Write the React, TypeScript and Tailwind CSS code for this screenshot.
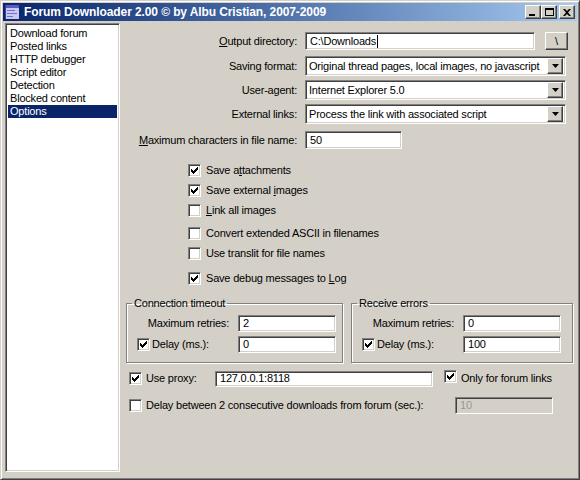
import React from 'react';

const sunken =
  'border border-t-[#808080] border-l-[#808080] border-b-white border-r-white shadow-[inset_1px_1px_0_#404040,inset_-1px_-1px_0_#d4d0c8]';
const raised =
  'border border-t-white border-l-white border-b-[#404040] border-r-[#404040] shadow-[inset_-1px_-1px_0_#808080] bg-[#d4d0c8]';

function Check({ on }: { on?: boolean }) {
  return (
    <span className={`relative inline-block w-[13px] h-[13px] shrink-0 bg-white ${sunken}`}>
      {on && (
        <svg className="absolute left-[2px] top-[2px]" width="7" height="7" viewBox="0 0 7 7">
          <path d="M0 2h1v1h1v1h1V3h1V2h1V1h1V0h1v3H6v1H5v1H4v1H3v1H2V6H1V5H0z" fill="#000" />
        </svg>
      )}
    </span>
  );
}

function Field({ value, className = '', disabled, caret }: { value: string; className?: string; disabled?: boolean; caret?: boolean }) {
  return (
    <div
      className={`flex items-center pl-[4px] ${sunken} ${disabled ? 'bg-[#d4d0c8] text-[#9a9890]' : 'bg-white'} ${className}`}
    >
      <span className="whitespace-nowrap">{value}</span>
      {caret && <span className="inline-block w-px h-[13px] bg-black ml-px" />}
    </div>
  );
}

function Combo({ value }: { value: string }) {
  return (
    <div className={`flex items-center w-[261px] h-[20px] bg-white p-[2px] ${sunken}`}>
      <span className="flex-1 pl-[1px] whitespace-nowrap">{value}</span>
      <span className={`flex items-center justify-center w-[16px] h-[16px] ${raised}`}>
        <svg width="7" height="4" viewBox="0 0 7 4">
          <path d="M0 0h7L3.5 4z" fill="#000" />
        </svg>
      </span>
    </div>
  );
}

function Label({ children, className = '' }: { children: React.ReactNode; className?: string }) {
  return <span className={`w-[177px] text-right whitespace-nowrap ${className}`}>{children}</span>;
}

function CheckRow({ on, children, className = '' }: { on?: boolean; children: React.ReactNode; className?: string }) {
  return (
    <div className={`flex items-center h-[20px] pl-[68px] ${className}`}>
      <Check on={on} />
      <span className="ml-[5px] whitespace-nowrap">{children}</span>
    </div>
  );
}

function Group({ title, retries, delay, className = '' }: { title: string; retries: string; delay: string; className?: string }) {
  return (
    <fieldset className={`border border-[#808080] shadow-[1px_1px_0_#fff,inset_1px_1px_0_#fff] h-[66px] ${className}`}>
      <legend className="ml-[5px] px-[2px] leading-[13px]">{title}</legend>
      <div className="flex items-center h-[17px] mt-[5px]">
        <span className="w-[102px] text-right whitespace-nowrap">Maximum retries:</span>
        <Field value={retries} className="ml-[9px] w-[98px] h-[17px]" />
      </div>
      <div className="flex items-center h-[17px] mt-[4px]">
        <span className="w-[102px] flex items-center pl-[10px]">
          <Check on />
          <span className="ml-[2px] whitespace-nowrap">Delay (ms.):</span>
        </span>
        <Field value={delay} className="ml-[9px] w-[98px] h-[17px]" />
      </div>
    </fieldset>
  );
}

function TitleButton({ children, className = '' }: { children: React.ReactNode; className?: string }) {
  return (
    <span className={`flex items-center justify-center w-[16px] h-[14px] ${raised} ${className}`}>{children}</span>
  );
}

const items = ['Download forum', 'Posted links', 'HTTP debugger', 'Script editor', 'Detection', 'Blocked content', 'Options'];

export default function App() {
  return (
    <div className="w-[580px] h-[480px] bg-[#d4d0c8] border border-t-[#d4d0c8] border-l-[#d4d0c8] border-b-[#404040] border-r-[#404040] shadow-[inset_1px_1px_0_#fff,inset_-1px_-1px_0_#808080] p-[2px] font-['Liberation_Sans',Arial,sans-serif] text-[11px] text-black tracking-[-0.2px] overflow-hidden">
      <div className="flex items-center h-[18px] bg-linear-to-r from-[#0a246a] to-[#a6caf0] pl-[1px] pr-[2px]">
        <svg width="16" height="14" viewBox="0 0 16 14">
          <rect x="1" y="0" width="14" height="14" fill="#c8c8f0" />
          <rect x="1" y="0" width="14" height="3" fill="#5a5ac8" />
          <rect x="3" y="5" width="8" height="1" fill="#7070d0" />
          <rect x="3" y="8" width="10" height="1" fill="#7070d0" />
          <rect x="3" y="11" width="6" height="1" fill="#7070d0" />
          <rect x="1" y="0" width="1" height="14" fill="#3a3aa0" />
        </svg>
        <span className="ml-[4px] text-white font-bold text-[12px] tracking-[-0.1px] whitespace-nowrap">
          Forum Downloader 2.00 © by Albu Cristian, 2007-2009
        </span>
        <span className="ml-auto flex items-center">
          <TitleButton>
            <span className="w-[6px] h-[2px] bg-black mt-[6px] mr-[2px]" />
          </TitleButton>
          <TitleButton>
            <span className="w-[9px] h-[8px] border border-black border-t-2" />
          </TitleButton>
          <TitleButton className="ml-[2px]">
            <svg width="8" height="7" viewBox="0 0 8 7">
              <path d="M0 0h2l2 2 2-2h2L5 3.5 8 7H6L4 5 2 7H0l3-3.5z" fill="#000" />
            </svg>
          </TitleButton>
        </span>
      </div>

      <div className="flex pt-[2px] pl-[2px]">
        <div className={`w-[115px] h-[449px] bg-white p-[2px] pt-[3px] ${sunken}`}>
          {items.map((t) => (
            <div
              key={t}
              className={`h-[13px] leading-[13px] pl-[2px] whitespace-nowrap ${t === 'Options' ? 'bg-[#0a246a] text-white' : ''}`}
            >
              {t}
            </div>
          ))}
        </div>

        <div className="flex flex-col pt-[9px] w-[455px]">
          <div className="flex items-center h-[18px]">
            <Label>
              <span className="underline">O</span>utput directory:
            </Label>
            <Field value="C:\Downloads" caret className="ml-[8px] w-[230px] h-[18px]" />
            <span className={`ml-[10px] w-[23px] h-[18px] flex items-center justify-center ${raised}`}>\</span>
          </div>
          <div className="flex items-center mt-[6px]">
            <Label>Saving format:</Label>
            <span className="ml-[8px]">
              <Combo value="Original thread pages, local images, no javascript" />
            </span>
          </div>
          <div className="flex items-center mt-[4px]">
            <Label>User-agent:</Label>
            <span className="ml-[8px]">
              <Combo value="Internet Explorer 5.0" />
            </span>
          </div>
          <div className="flex items-center mt-[4px]">
            <Label>External links:</Label>
            <span className="ml-[8px]">
              <Combo value="Process the link with associated script" />
            </span>
          </div>
          <div className="flex items-center mt-[7px]">
            <Label>
              <span className="underline">M</span>aximum characters in file name:
            </Label>
            <Field value="50" className="ml-[8px] w-[97px] h-[18px]" />
          </div>

          <div className="mt-[11px]">
            <CheckRow on>
              Save a<span className="underline">t</span>tachments
            </CheckRow>
            <CheckRow on>
              Save external <span className="underline">i</span>mages
            </CheckRow>
            <CheckRow>
              <span className="underline">L</span>ink all images
            </CheckRow>
            <CheckRow className="mt-[3px]">Convert extended ASCII in filenames</CheckRow>
            <CheckRow>Use translit for file names</CheckRow>
            <CheckRow on className="mt-[5px]">
              Save debug messages to <span className="underline">L</span>og
            </CheckRow>
          </div>

          <div className="flex mt-[9px] pl-[6px]">
            <Group title="Connection timeout" retries="2" delay="0" className="w-[217px]" />
            <Group title="Receive errors" retries="0" delay="100" className="w-[222px] ml-[8px]" />
          </div>

          <div className="flex items-center h-[17px] mt-[7px] pl-[9px]">
            <Check on />
            <span className="ml-[4px] w-[69px] whitespace-nowrap">Use proxy:</span>
            <Field value="127.0.0.1:8118" className="w-[218px] h-[16px]" />
            <span className="ml-[11px]">
              <Check on />
            </span>
            <span className="ml-[4px] whitespace-nowrap">Only for forum links</span>
          </div>

          <div className="flex items-center h-[17px] mt-[10px] pl-[9px]">
            <Check />
            <span className="ml-[4px] w-[309px] whitespace-nowrap">
              Delay between 2 consecutive downloads from forum (sec.):
            </span>
            <Field value="10" disabled className="w-[98px] h-[17px]" />
          </div>
        </div>
      </div>
    </div>
  );
}
